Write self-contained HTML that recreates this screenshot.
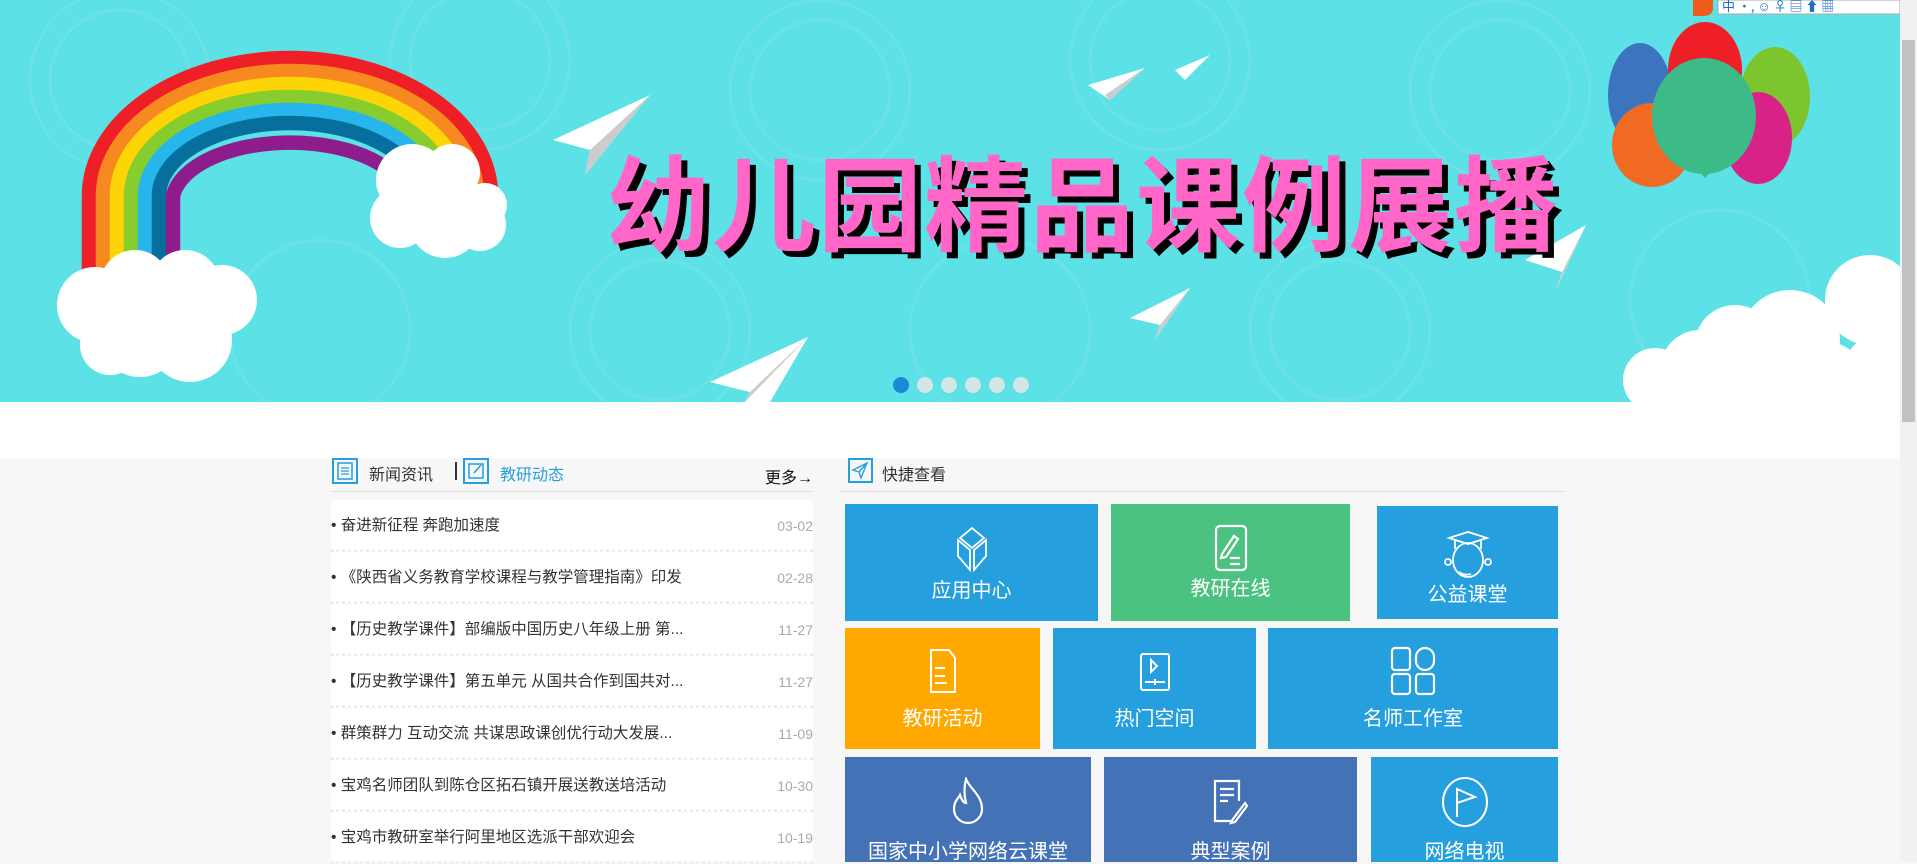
<!DOCTYPE html>
<html><head><meta charset="utf-8"><style>
*{margin:0;padding:0;box-sizing:border-box}
body{width:1917px;height:862px;overflow:hidden;background:#f7f7f7;font-family:"Liberation Sans","Noto Sans CJK SC",sans-serif;position:relative}
.ab{position:absolute}
.banner{left:0;top:0;width:1900px;height:402px;background:#5ce1e6;overflow:hidden}
.white{left:0;top:402px;width:1900px;height:56px;background:#fff}
.sb{left:1900px;top:0;width:17px;height:862px;background:#f1f1f1}
.thumb{left:1902px;top:40px;width:13px;height:382px;background:#c1c1c1}
.hd{font-size:16px;color:#333}
.list{left:331px;top:500px;width:482px;height:362px;background:#fff}
.item{position:absolute;left:0;width:482px;height:52px;font-size:15.5px;color:#333;line-height:52px}
.item .d{position:absolute;right:0;top:0;color:#aaa;font-size:14px}
.item:after{content:"";position:absolute;left:0;right:0;bottom:0;border-bottom:3px dotted #eee}
.tile{position:absolute;color:#fff;font-size:20px;text-align:center}
.tile span{position:absolute;left:0;right:0}
.tile svg{position:absolute;left:50%;transform:translateX(-50%)}
</style></head><body>
<div class="ab banner">
<svg width="1900" height="402" viewBox="0 0 1900 402">
<g fill="none" stroke="#7fe4e6" stroke-width="3" opacity="0.45">
<circle cx="120" cy="80" r="90"/><circle cx="120" cy="80" r="70"/><circle cx="480" cy="60" r="90"/><circle cx="480" cy="60" r="70"/><circle cx="820" cy="90" r="90"/><circle cx="820" cy="90" r="70"/><circle cx="1160" cy="60" r="90"/><circle cx="1160" cy="60" r="70"/><circle cx="1500" cy="90" r="90"/><circle cx="1500" cy="90" r="70"/><circle cx="320" cy="330" r="90"/><circle cx="660" cy="330" r="90"/><circle cx="660" cy="330" r="70"/><circle cx="1000" cy="330" r="90"/><circle cx="1340" cy="330" r="90"/><circle cx="1340" cy="330" r="70"/><circle cx="1720" cy="300" r="90"/>
</g>
<g fill="none" stroke-width="14.5">
<path d="M89 290 V196 A201 138 0 0 1 491 196" stroke="#ee1f26"/>
<path d="M103 290 V196 A187 125 0 0 1 477 196" stroke="#f6891f"/>
<path d="M117 290 V196 A173 112 0 0 1 463 196" stroke="#fdd406"/>
<path d="M131 290 V196 A159 99 0 0 1 449 196" stroke="#86cd2d"/>
<path d="M145 290 V196 A145 86 0 0 1 435 196" stroke="#27b6ec"/>
<path d="M159 290 V196 A131 73 0 0 1 421 196" stroke="#066f9e"/>
<path d="M173 290 V196 A117 60 0 0 1 407 210" stroke="#8e1c8c"/>
</g>
<g fill="#fff">
<circle cx="95" cy="305" r="38"/><circle cx="135" cy="285" r="35"/><circle cx="185" cy="285" r="35"/><circle cx="222" cy="300" r="35"/><circle cx="140" cy="335" r="42"/><circle cx="190" cy="340" r="42"/><circle cx="110" cy="345" r="30"/>
<circle cx="412" cy="180" r="36"/><circle cx="452" cy="172" r="28"/><circle cx="485" cy="205" r="22"/><circle cx="400" cy="218" r="30"/><circle cx="445" cy="222" r="36"/><circle cx="480" cy="225" r="26"/>
<circle cx="1870" cy="300" r="45"/><circle cx="1790" cy="340" r="50"/><circle cx="1735" cy="345" r="40"/><circle cx="1700" cy="370" r="40"/><circle cx="1655" cy="380" r="32"/><circle cx="1820" cy="390" r="50"/><circle cx="1745" cy="395" r="40"/><circle cx="1890" cy="380" r="50"/>
</g>
<g>
<polygon points="650,95 553,140 590,150 585,175" fill="#fff"/><polygon points="650,95 590,150 585,175" fill="#ccc"/>
<polygon points="1145,68 1088,85 1110,100" fill="#fff"/><polygon points="1145,68 1110,100 1105,95" fill="#ccc"/>
<polygon points="1210,55 1175,70 1185,80" fill="#fff"/>
<polygon points="1586,225 1525,260 1562,272 1556,290" fill="#fff"/><polygon points="1586,225 1562,272 1556,290" fill="#ccc"/>
<polygon points="1190,288 1130,318 1160,325 1155,340" fill="#fff"/><polygon points="1190,288 1160,325 1155,340" fill="#ccc"/>
<polygon points="808,337 710,382 750,392 745,402 770,402" fill="#fff"/><polygon points="808,337 750,392 745,402" fill="#ccc"/>
</g>
<g>
<ellipse cx="1640" cy="95" rx="32" ry="52" fill="#3c74c0"/>
<ellipse cx="1705" cy="70" rx="37" ry="48" fill="#ee1f26"/>
<ellipse cx="1775" cy="97" rx="35" ry="50" fill="#7dc52e"/>
<ellipse cx="1652" cy="145" rx="40" ry="42" fill="#f06a24"/>
<ellipse cx="1758" cy="138" rx="34" ry="46" fill="#d92288"/>
<ellipse cx="1704" cy="116" rx="52" ry="58" fill="#3cba88"/>
<polygon points="1705,178 1698,170 1712,170" fill="#3cba88"/>
</g>
<text x="1089" y="249" text-anchor="middle" font-size="104" font-weight="bold" font-family="'Noto Sans CJK SC',sans-serif" fill="#000" letter-spacing="2">幼儿园精品课例展播</text>
<text x="1083" y="243" text-anchor="middle" font-size="104" font-weight="bold" font-family="'Noto Sans CJK SC',sans-serif" fill="#ff66c8" letter-spacing="2">幼儿园精品课例展播</text>
<circle cx="901" cy="385" r="8" fill="#1b88d8"/>
<circle cx="925" cy="385" r="8" fill="#d2e6e6"/><circle cx="949" cy="385" r="8" fill="#d2e6e6"/><circle cx="973" cy="385" r="8" fill="#d2e6e6"/><circle cx="997" cy="385" r="8" fill="#d2e6e6"/><circle cx="1021" cy="385" r="8" fill="#d2e6e6"/>
<rect x="1718" y="0" width="182" height="14" fill="#fff" stroke="#aaa"/>
<path d="M1693 0 h20 v8 q0 8 -10 8 h-10" fill="#f05a1a"/>
<text x="1722" y="11" font-size="13" fill="#1a6fc6" font-family="'Noto Sans CJK SC',sans-serif">中 ·, ☺ ♀ ▤  ⬆ ▦</text>
</svg>
</div>
<div class="ab white"></div>
<div class="ab sb"></div><div class="ab thumb"></div>

<div class="ab" style="left:332px;top:458px;width:26px;height:26px;border:2px solid #259fde"><svg width="22" height="22"><rect x="4" y="3" width="14" height="16" fill="none" stroke="#259fde" stroke-width="1.5"/><path d="M7 8h8M7 11h8M7 14h8" stroke="#259fde" stroke-width="1.3"/></svg></div>
<div class="ab hd" style="left:369px;top:461px">新闻资讯</div>
<div class="ab" style="left:455px;top:462px;width:2px;height:18px;background:#333"></div>
<div class="ab" style="left:463px;top:458px;width:26px;height:26px;border:2px solid #259fde"><svg width="22" height="22"><rect x="4" y="4" width="14" height="14" fill="none" stroke="#259fde" stroke-width="1.5"/><path d="M9 13l7-8" stroke="#259fde" stroke-width="1.6"/></svg></div>
<div class="ab hd" style="left:500px;top:461px;color:#259fde">教研动态</div>
<div class="ab hd" style="left:765px;top:464px;color:#111">更多→</div>
<div class="ab" style="left:331px;top:491px;width:482px;height:1px;background:#ddd"></div>

<div class="ab list">
<div class="item" style="top:0">• 奋进新征程 奔跑加速度<span class="d">03-02</span></div>
<div class="item" style="top:52px">• 《陕西省义务教育学校课程与教学管理指南》印发<span class="d">02-28</span></div>
<div class="item" style="top:104px">• 【历史教学课件】部编版中国历史八年级上册 第...<span class="d">11-27</span></div>
<div class="item" style="top:156px">• 【历史教学课件】第五单元 从国共合作到国共对...<span class="d">11-27</span></div>
<div class="item" style="top:208px">• 群策群力 互动交流 共谋思政课创优行动大发展...<span class="d">11-09</span></div>
<div class="item" style="top:260px">• 宝鸡名师团队到陈仓区拓石镇开展送教送培活动<span class="d">10-30</span></div>
<div class="item" style="top:312px">• 宝鸡市教研室举行阿里地区选派干部欢迎会<span class="d">10-19</span></div>
</div>

<div class="ab" style="left:848px;top:458px;width:25px;height:25px;border:2px solid #259fde"><svg width="21" height="21"><path d="M17 3L3 10l6 2 2 6z M9 12l8-9" fill="none" stroke="#259fde" stroke-width="1.4"/></svg></div>
<div class="ab hd" style="left:882px;top:461px">快捷查看</div>
<div class="ab" style="left:840px;top:491px;width:725px;height:1px;background:#ddd"></div>

<div class="tile" style="left:845px;top:504px;width:253px;height:117px;background:#259fde">
<svg style="top:22px" width="40" height="46" viewBox="0 0 40 46" fill="none" stroke="#fff" stroke-width="1.8"><path d="M20 2l12 10-12 10-12-10z M6 14v16l12 14V24z M34 14v16L22 44V24z"/></svg><span style="top:70px">应用中心</span></div>
<div class="tile" style="left:1111px;top:504px;width:239px;height:117px;background:#4bc27f">
<svg style="top:20px" width="34" height="48" viewBox="0 0 34 48" fill="none" stroke="#fff" stroke-width="2.2"><rect x="2" y="2" width="30" height="44" rx="4"/><path d="M8 30l12-18 4 3-12 18-5 1z M16 34h10M16 40h10"/></svg><span style="top:68px">教研在线</span></div>
<div class="tile" style="left:1377px;top:506px;width:181px;height:113px;background:#259fde">
<svg style="top:22px" width="50" height="52" viewBox="0 0 50 52" fill="none" stroke="#fff" stroke-width="1.8"><path d="M6 10l19-6 19 6-19 6z M12 13v8 M38 13v8"/><ellipse cx="25" cy="32" rx="15" ry="17"/><circle cx="5" cy="34" r="3"/><circle cx="45" cy="34" r="3"/><path d="M16 44q5 4 12 2"/></svg><span style="top:72px">公益课堂</span></div>

<div class="tile" style="left:845px;top:628px;width:195px;height:121px;background:#fea800">
<svg style="top:20px" width="28" height="46" viewBox="0 0 28 46" fill="none" stroke="#fff" stroke-width="2"><path d="M2 2h18l6 8v34H2z M6 20h10M6 28h10M6 35h12"/></svg><span style="top:74px">教研活动</span></div>
<div class="tile" style="left:1053px;top:628px;width:203px;height:121px;background:#259fde">
<svg style="top:24px" width="32" height="40" viewBox="0 0 32 40" fill="none" stroke="#fff" stroke-width="2"><rect x="2" y="2" width="28" height="36" rx="2"/><path d="M12 8v12l6-6z M6 30h20 M16 27v6"/></svg><span style="top:74px">热门空间</span></div>
<div class="tile" style="left:1268px;top:628px;width:290px;height:121px;background:#259fde">
<svg style="top:18px" width="46" height="50" viewBox="0 0 46 50" fill="none" stroke="#fff" stroke-width="2.2"><rect x="2" y="2" width="18" height="22" rx="3"/><rect x="26" y="2" width="18" height="22" rx="9"/><rect x="2" y="28" width="18" height="20" rx="3"/><rect x="26" y="28" width="18" height="20" rx="3"/></svg><span style="top:74px">名师工作室</span></div>

<div class="tile" style="left:845px;top:757px;width:246px;height:105px;background:#4472b6">
<svg style="top:20px" width="32" height="48" viewBox="0 0 32 48" fill="none" stroke="#fff" stroke-width="2.2"><path d="M14 2c4 10 16 16 16 30a14 14 0 0 1-28 0c0-8 4-10 6-14 2 6 4 8 6 8-2-8-2-16 0-24z"/></svg><span style="top:78px">国家中小学网络云课堂</span></div>
<div class="tile" style="left:1104px;top:757px;width:253px;height:105px;background:#4472b6">
<svg style="top:20px" width="40" height="48" viewBox="0 0 40 48" fill="none" stroke="#fff" stroke-width="2.2"><path d="M28 24V4H4v40h18 M9 12h14M9 18h14M9 24h8 M34 26l-12 16-2 4 4-1 12-16z"/></svg><span style="top:78px">典型案例</span></div>
<div class="tile" style="left:1371px;top:757px;width:187px;height:105px;background:#259fde">
<svg style="top:20px" width="48" height="50" viewBox="0 0 48 50" fill="none" stroke="#fff" stroke-width="2"><ellipse cx="24" cy="25" rx="22" ry="24"/><path d="M16 40V12l18 8-18 6"/></svg><span style="top:78px">网络电视</span></div>
</body></html>
